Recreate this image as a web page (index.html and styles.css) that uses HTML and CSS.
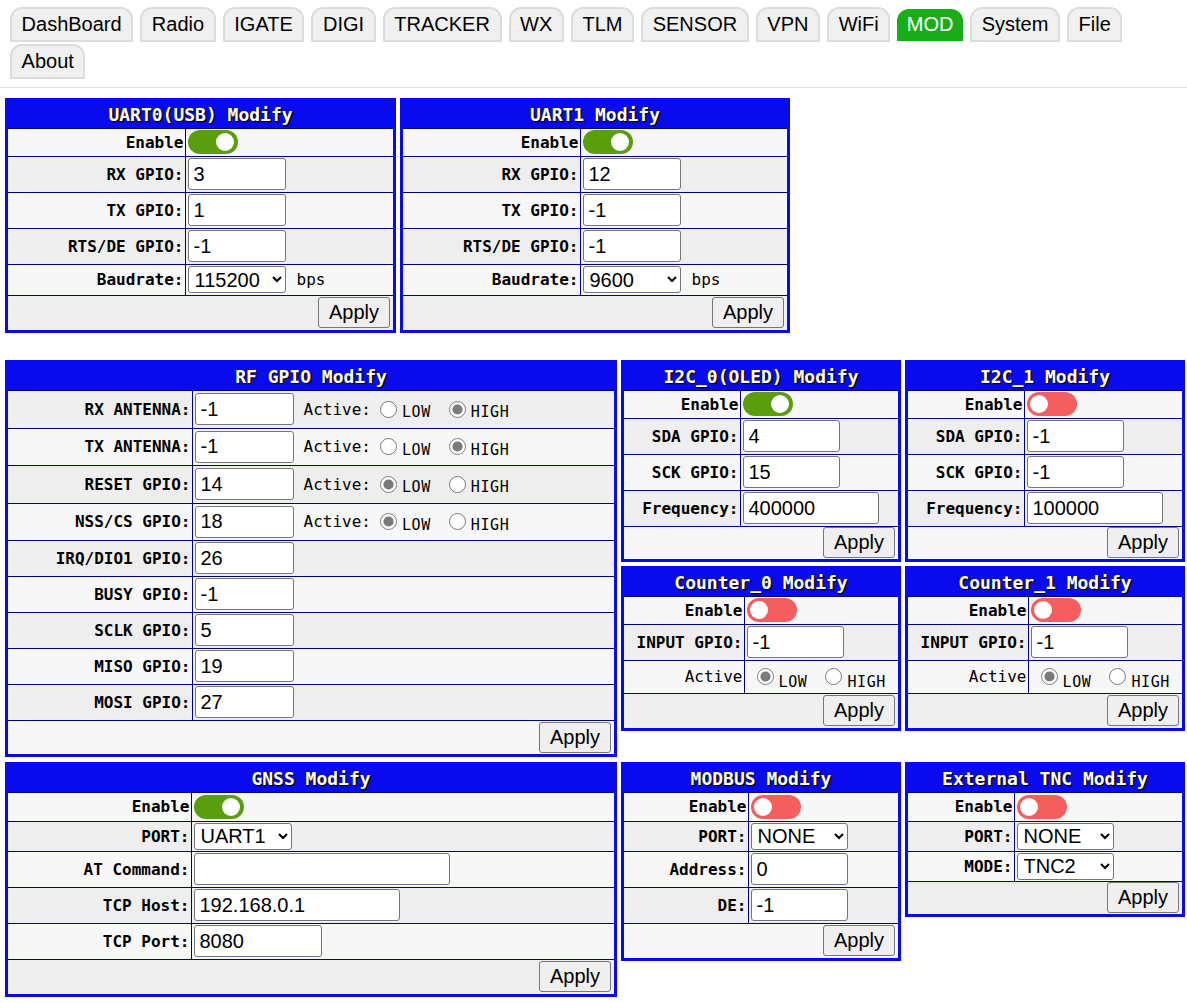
FILE: index.html
```html
<!DOCTYPE html>
<html lang="en">
<head>
<meta charset="utf-8">
<title>MOD</title>
<link rel="stylesheet" href="styles.css">
</head>
<body>
<nav class="tabs">
  <a class="tab">DashBoard</a>
  <a class="tab">Radio</a>
  <a class="tab">IGATE</a>
  <a class="tab">DIGI</a>
  <a class="tab">TRACKER</a>
  <a class="tab">WX</a>
  <a class="tab">TLM</a>
  <a class="tab">SENSOR</a>
  <a class="tab">VPN</a>
  <a class="tab">WiFi</a>
  <a class="tab active">MOD</a>
  <a class="tab">System</a>
  <a class="tab">File</a>
  <a class="tab">About</a>
</nav>
<hr class="sep">

<div class="row row1">
  <div class="panel w391">
    <table>
      <colgroup><col class="c177"><col></colgroup>
      <tr class="h27"><th colspan="2">UART0(USB) Modify</th></tr>
      <tr class="h28 lt"><td class="lbl">Enable</td><td><span class="toggle on"><span class="knob"></span></span></td></tr>
      <tr class="h36 dk"><td class="lbl">RX GPIO:</td><td><input class="in98" value="3"></td></tr>
      <tr class="h36 lt"><td class="lbl">TX GPIO:</td><td><input class="in98" value="1"></td></tr>
      <tr class="h36 dk"><td class="lbl">RTS/DE GPIO:</td><td><input class="in98" value="-1"></td></tr>
      <tr class="h31 lt"><td class="lbl">Baudrate:</td><td><select class="sel98"><option>115200</option></select><span class="unit">bps</span></td></tr>
      <tr class="h35 dk"><td colspan="2" class="act"><button>Apply</button></td></tr>
    </table>
  </div>
  <div class="panel w390">
    <table>
      <colgroup><col class="c177"><col></colgroup>
      <tr class="h27"><th colspan="2">UART1 Modify</th></tr>
      <tr class="h28 lt"><td class="lbl">Enable</td><td><span class="toggle on"><span class="knob"></span></span></td></tr>
      <tr class="h36 dk"><td class="lbl">RX GPIO:</td><td><input class="in98" value="12"></td></tr>
      <tr class="h36 lt"><td class="lbl">TX GPIO:</td><td><input class="in98" value="-1"></td></tr>
      <tr class="h36 dk"><td class="lbl">RTS/DE GPIO:</td><td><input class="in98" value="-1"></td></tr>
      <tr class="h31 lt"><td class="lbl">Baudrate:</td><td><select class="sel98"><option>9600</option><option>115200</option></select><span class="unit">bps</span></td></tr>
      <tr class="h35 dk"><td colspan="2" class="act"><button>Apply</button></td></tr>
    </table>
  </div>
</div>

<div class="row row2">
  <div class="panel w612">
    <table>
      <colgroup><col class="c184"><col></colgroup>
      <tr class="h27"><th colspan="2">RF GPIO Modify</th></tr>
      <tr class="h38 dk"><td class="lbl">RX ANTENNA:</td><td><div class="line"><input class="in99" value="-1"><span class="active-lbl">Active:</span><input type="radio" name="rx"><span class="opt">LOW</span><input type="radio" name="rx" class="r2" checked><span class="opt">HIGH</span></div></td></tr>
      <tr class="h37 lt"><td class="lbl">TX ANTENNA:</td><td><div class="line"><input class="in99" value="-1"><span class="active-lbl">Active:</span><input type="radio" name="tx"><span class="opt">LOW</span><input type="radio" name="tx" class="r2" checked><span class="opt">HIGH</span></div></td></tr>
      <tr class="h38 dk"><td class="lbl">RESET GPIO:</td><td><div class="line"><input class="in99" value="14"><span class="active-lbl">Active:</span><input type="radio" name="rst" checked><span class="opt">LOW</span><input type="radio" name="rst" class="r2"><span class="opt">HIGH</span></div></td></tr>
      <tr class="h37 lt"><td class="lbl">NSS/CS GPIO:</td><td><div class="line"><input class="in99" value="18"><span class="active-lbl">Active:</span><input type="radio" name="nss" checked><span class="opt">LOW</span><input type="radio" name="nss" class="r2"><span class="opt">HIGH</span></div></td></tr>
      <tr class="h36 dk"><td class="lbl">IRQ/DIO1 GPIO:</td><td><input class="in99" value="26"></td></tr>
      <tr class="h36 lt"><td class="lbl">BUSY GPIO:</td><td><input class="in99" value="-1"></td></tr>
      <tr class="h36 dk"><td class="lbl">SCLK GPIO:</td><td><input class="in99" value="5"></td></tr>
      <tr class="h36 lt"><td class="lbl">MISO GPIO:</td><td><input class="in99" value="19"></td></tr>
      <tr class="h36 dk"><td class="lbl">MOSI GPIO:</td><td><input class="in99" value="27"></td></tr>
      <tr class="h34 lt"><td colspan="2" class="act"><button>Apply</button></td></tr>
    </table>
  </div>

  <div class="side">
    <div class="panel w280">
      <table>
        <colgroup><col class="c116"><col></colgroup>
        <tr class="h27"><th colspan="2">I2C_0(OLED) Modify</th></tr>
        <tr class="h28 lt"><td class="lbl">Enable</td><td><span class="toggle on"><span class="knob"></span></span></td></tr>
        <tr class="h36 dk"><td class="lbl">SDA GPIO:</td><td><input class="in96" value="4"></td></tr>
        <tr class="h36 lt"><td class="lbl">SCK GPIO:</td><td><input class="in96" value="15"></td></tr>
        <tr class="h36 dk"><td class="lbl">Frequency:</td><td><input class="in136" value="400000"></td></tr>
        <tr class="h33 lt"><td colspan="2" class="act"><button>Apply</button></td></tr>
      </table>
    </div>
    <div class="panel w280">
      <table>
        <colgroup><col class="c116"><col></colgroup>
        <tr class="h27"><th colspan="2">I2C_1 Modify</th></tr>
        <tr class="h28 lt"><td class="lbl">Enable</td><td><span class="toggle off"><span class="knob"></span></span></td></tr>
        <tr class="h36 dk"><td class="lbl">SDA GPIO:</td><td><input class="in96" value="-1"></td></tr>
        <tr class="h36 lt"><td class="lbl">SCK GPIO:</td><td><input class="in96" value="-1"></td></tr>
        <tr class="h36 dk"><td class="lbl">Frequency:</td><td><input class="in136" value="100000"></td></tr>
        <tr class="h33 lt"><td colspan="2" class="act"><button>Apply</button></td></tr>
      </table>
    </div>
    <div class="panel w280">
      <table>
        <colgroup><col class="c120"><col></colgroup>
        <tr class="h27"><th colspan="2">Counter_0 Modify</th></tr>
        <tr class="h28 lt"><td class="lbl">Enable</td><td><span class="toggle off"><span class="knob"></span></span></td></tr>
        <tr class="h36 dk"><td class="lbl">INPUT GPIO:</td><td><input class="in96" value="-1"></td></tr>
        <tr class="h33 lt"><td class="lbl plain">Active</td><td><div class="line cnt"><input type="radio" name="c0" checked><span class="opt">LOW</span><input type="radio" name="c0" class="r2"><span class="opt">HIGH</span></div></td></tr>
        <tr class="h35 dk"><td colspan="2" class="act"><button>Apply</button></td></tr>
      </table>
    </div>
    <div class="panel w280">
      <table>
        <colgroup><col class="c120"><col></colgroup>
        <tr class="h27"><th colspan="2">Counter_1 Modify</th></tr>
        <tr class="h28 lt"><td class="lbl">Enable</td><td><span class="toggle off"><span class="knob"></span></span></td></tr>
        <tr class="h36 dk"><td class="lbl">INPUT GPIO:</td><td><input class="in96" value="-1"></td></tr>
        <tr class="h33 lt"><td class="lbl plain">Active</td><td><div class="line cnt"><input type="radio" name="c1" checked><span class="opt">LOW</span><input type="radio" name="c1" class="r2"><span class="opt">HIGH</span></div></td></tr>
        <tr class="h35 dk"><td colspan="2" class="act"><button>Apply</button></td></tr>
      </table>
    </div>
  </div>
</div>

<div class="row row3">
  <div class="panel w612">
    <table>
      <colgroup><col class="c183"><col></colgroup>
      <tr class="h27"><th colspan="2">GNSS Modify</th></tr>
      <tr class="h29 lt"><td class="lbl">Enable</td><td><span class="toggle on"><span class="knob"></span></span></td></tr>
      <tr class="h30 dk"><td class="lbl">PORT:</td><td><select class="sel98"><option>UART1</option></select></td></tr>
      <tr class="h36 lt"><td class="lbl">AT Command:</td><td><input class="in256" value=""></td></tr>
      <tr class="h36 dk"><td class="lbl">TCP Host:</td><td><input class="in206" value="192.168.0.1"></td></tr>
      <tr class="h36 lt"><td class="lbl">TCP Port:</td><td><input class="in128" value="8080"></td></tr>
      <tr class="h35 dk"><td colspan="2" class="act"><button>Apply</button></td></tr>
    </table>
  </div>
  <div class="panel w280">
    <table>
      <colgroup><col class="c124"><col></colgroup>
      <tr class="h27"><th colspan="2">MODBUS Modify</th></tr>
      <tr class="h29 lt"><td class="lbl">Enable</td><td><span class="toggle off"><span class="knob"></span></span></td></tr>
      <tr class="h30 dk"><td class="lbl">PORT:</td><td><select class="sel96"><option>NONE</option></select></td></tr>
      <tr class="h36 lt"><td class="lbl">Address:</td><td><input class="in96" value="0"></td></tr>
      <tr class="h36 dk"><td class="lbl">DE:</td><td><input class="in96" value="-1"></td></tr>
      <tr class="h35 lt"><td colspan="2" class="act"><button>Apply</button></td></tr>
    </table>
  </div>
  <div class="panel w280">
    <table>
      <colgroup><col class="c106"><col></colgroup>
      <tr class="h27"><th colspan="2">External TNC Modify</th></tr>
      <tr class="h29 lt"><td class="lbl">Enable</td><td><span class="toggle off"><span class="knob"></span></span></td></tr>
      <tr class="h30 dk"><td class="lbl">PORT:</td><td><select class="sel96"><option>NONE</option></select></td></tr>
      <tr class="h30 lt"><td class="lbl">MODE:</td><td><select class="sel96"><option>TNC2</option></select></td></tr>
      <tr class="h33 dk"><td colspan="2" class="act"><button>Apply</button></td></tr>
    </table>
  </div>
</div>
</body>
</html>
```

FILE: styles.css
```css
* { box-sizing: border-box; }

body {
  margin: 0;
  padding: 7px 0 0 0;
  background: #fff;
  color: #000;
  font-family: "Liberation Sans", Arial, sans-serif;
}

/* ---------- tabs ---------- */
.tabs {
  display: flex;
  flex-wrap: wrap;
  align-items: flex-start;
  gap: 2px 7px;
  padding: 0 10px;
}
.tab {
  display: block;
  font-size: 20px;
  line-height: 23px;
  padding: 4px 9.6px;
  border: 2px solid #dcdcdc;
  border-radius: 12px 12px 0 0;
  background: #f0f0f0;
  color: #000;
  cursor: pointer;
}
.tab.active {
  border: 0;
  padding: 4px 9.6px 5px;
  margin-top: 2px;
  background: #19ae19;
  color: #fff;
}

hr.sep {
  border: 0;
  border-top: 1px solid #dddddd;
  margin: 8px 0 10px 0;
}

/* ---------- layout ---------- */
.row {
  display: flex;
  align-items: flex-start;
  gap: 4px;
  padding-left: 5px;
}
.row2 { margin-top: 27px; }
.row3 { margin-top: 5px; }

.side {
  display: grid;
  grid-template-columns: 280px 280px;
  gap: 4px;
  align-items: start;
}

/* ---------- panels ---------- */
.panel {
  border: 3px solid #0a0aee;
  background: #fff;
  flex: none;
}
.w391 { width: 391px; }
.w390 { width: 390px; }
.w612 { width: 612px; }
.w280 { width: 280px; }

.panel table {
  width: 100%;
  border-collapse: collapse;
  table-layout: fixed;
}

.c177 { width: 177px; }
.c184 { width: 184px; }
.c183 { width: 183px; }
.c116 { width: 116px; }
.c120 { width: 120px; }
.c124 { width: 124px; }
.c106 { width: 106px; }

.panel th {
  background: #0a0aee;
  color: #fff;
  font-family: "DejaVu Sans Mono", monospace;
  font-weight: bold;
  font-size: 18px;
  text-shadow: 1px 1px 1px #000, 1px 1px 2px #222;
  padding: 0;
  text-align: center;
  border-bottom: 1px solid #000080;
}

.panel td {
  border: 1px solid #000080;
  padding: 0 2px;
  vertical-align: middle;
}
.panel td:first-child { border-left: 0; }
.panel td:last-child { border-right: 0; }
.panel tr:last-child td { border-bottom: 0; }

.lt td { background: #f7f7f7; }
.dk td { background: #eeeeee; }

.h27 { height: 27px; }
.h28 { height: 28px; }
.h29 { height: 29px; }
.h30 { height: 30px; }
.h31 { height: 31px; }
.h33 { height: 33px; }
.h34 { height: 34px; }
.h35 { height: 35px; }
.h36 { height: 36px; }
.h37 { height: 37px; }
.h38 { height: 38px; }

td.lbl {
  text-align: right;
  font-family: "DejaVu Sans Mono", monospace;
  font-weight: bold;
  font-size: 16px;
  white-space: nowrap;
  padding: 0 1px 0 0;
}
td.lbl.plain { font-weight: normal; }

td.act {
  text-align: right;
  padding: 0 3px 0 0;
}

/* ---------- controls ---------- */
input:not([type]) {
  height: 32px;
  font-family: "Liberation Sans", Arial, sans-serif;
  font-size: 20px;
  padding: 0 5px;
  border: 1px solid #767676;
  border-radius: 3px;
  background: #fff;
  color: #000;
  vertical-align: middle;
  margin: 0;
}
.in96 { width: 97px; }
.in98 { width: 98px; }
.in99 { width: 99px; }
.in128 { width: 128px; }
.in136 { width: 136px; }
.in206 { width: 206px; }
.in256 { width: 256px; }

select {
  height: 27px;
  font-family: "Liberation Sans", Arial, sans-serif;
  font-size: 20px;
  border: 1px solid #767676;
  border-radius: 3px;
  background: #fff;
  color: #000;
  padding: 0 0 0 2px;
  margin: 0;
  vertical-align: middle;
}
.sel98 { width: 98px; }
.sel96 { width: 97px; }

.unit {
  font-family: "DejaVu Sans Mono", monospace;
  font-size: 16px;
  margin-left: 11px;
  vertical-align: middle;
}

button {
  height: 31px;
  font-family: "Liberation Sans", Arial, sans-serif;
  font-size: 20px;
  padding: 0 10px;
  border: 1px solid #767676;
  border-radius: 3px;
  background: #efefef;
  color: #000;
  margin: 0;
  vertical-align: middle;
}

.toggle {
  display: inline-flex;
  align-items: center;
  width: 50px;
  height: 24px;
  border-radius: 12px;
  padding: 0 4px;
  vertical-align: middle;
}
.toggle.on { background: #5b9e0d; justify-content: flex-end; }
.toggle.off { background: #f55e5e; justify-content: flex-start; padding: 0 3px; }
.knob {
  width: 18px;
  height: 18px;
  border-radius: 50%;
  background: #fff;
}

.line {
  display: flex;
  align-items: center;
}
.active-lbl {
  font-family: "DejaVu Sans Mono", monospace;
  font-size: 16px;
  margin-left: 10px;
}
input[type="radio"] {
  width: 17px;
  height: 17px;
  margin: 0 0 0 9px;
  accent-color: #7a7a7a;
}
input[type="radio"].r2 { margin-left: 18px; }
.opt {
  font-family: "DejaVu Sans Mono", monospace;
  font-size: 15px;
  letter-spacing: 0.6px;
  margin-left: 5px;
  position: relative;
  top: 3px;
}
.line.cnt input[type="radio"] { margin-left: 10px; }
.line.cnt input[type="radio"].r2 { margin-left: 18px; }
.line.cnt .opt { top: 5px; }
```
